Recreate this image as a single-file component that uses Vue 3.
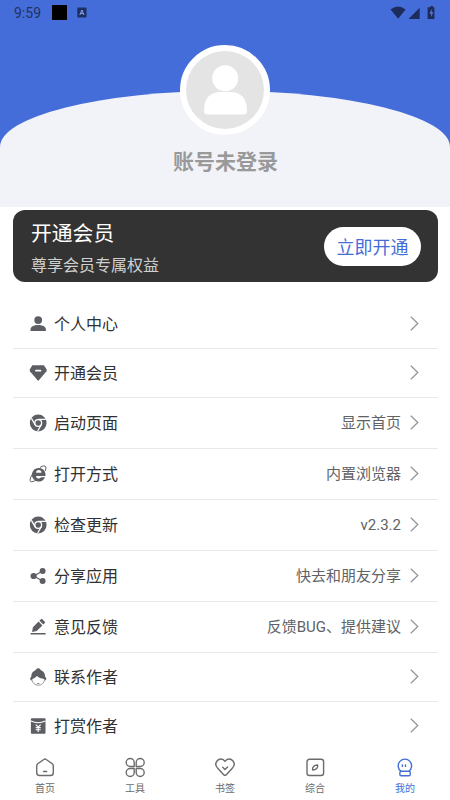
<script setup>
const rows = [
  { label: '个人中心', icon: 'user' },
  { label: '开通会员', icon: 'gem' },
  { label: '启动页面', icon: 'chrome', value: '显示首页' },
  { label: '打开方式', icon: 'ie', value: '内置浏览器' },
  { label: '检查更新', icon: 'chrome', value: 'v2.3.2' },
  { label: '分享应用', icon: 'share', value: '快去和朋友分享' },
  { label: '意见反馈', icon: 'pen', value: '反馈BUG、提供建议' },
  { label: '联系作者', icon: 'face' },
  { label: '打赏作者', icon: 'packet' },
]
const tabs = [
  { label: '首页', icon: 'home' },
  { label: '工具', icon: 'tools' },
  { label: '书签', icon: 'heart' },
  { label: '综合', icon: 'compass' },
  { label: '我的', icon: 'me', active: true },
]
</script>

<template>
  <main class="page">
    <header class="hero">
      <div class="status">
        <span class="time">9:59</span>
        <span class="block"></span>
        <svg class="input-icon" width="10" height="11" viewBox="0 0 10 11">
          <rect x=".3" y=".5" width="9.2" height="10" rx="1" fill="#1e2f64" />
          <path d="M2.8 8 4.9 3 7 8M3.5 6.4h2.8" fill="none" stroke="#8ba5ee" stroke-width="1" />
        </svg>
        <svg class="signals" width="48" height="16" viewBox="0 0 48 16">
          <g fill="#1d2c5b">
            <path d="M1.600 4.500Q9 -1.600 16.600 4.500L9.100 13.800Z" />
            <path d="M30.700 2.700V14H19.500Z" />
            <path d="M40 2.200h1.400V1h2.500v1.200h1.500V14h-6.800V2.200Z" />
          </g>
          <path d="M42.700 4 40.500 8.600h1.600V12l2.200-4.800h-1.600Z" fill="#5a7ce0" />
        </svg>
      </div>
      <div class="dome">
        <div class="avatar">
          <svg width="78" height="78" viewBox="0 0 78 78">
            <circle cx="39" cy="39" r="39" fill="#e4e4e4" />
            <circle cx="39.200" cy="27.300" r="13" fill="#fff" />
            <path d="M18 60Q18 41 35 41H44Q61 41 61 60Q61 63.500 57.500 63.500H21.500Q18 63.500 18 60Z" fill="#fff" />
          </svg>
        </div>
        <h1>账号未登录</h1>
      </div>
    </header>

    <section class="vip">
      <div class="vip-copy">
        <strong>开通会员</strong>
        <span>尊享会员专属权益</span>
      </div>
      <button>立即开通</button>
    </section>

    <ul class="list">
      <li v-for="row in rows" :key="row.label" :class="{ tall: row.value }">
        <svg class="icon" width="18" height="18" viewBox="0 0 18 18" fill="#5c5e63">
          <template v-if="row.icon === 'user'">
            <circle cx="9.200" cy="5.100" r="3.900" />
            <path d="M1.500 16V14.500C1.500 11.600 5.200 10.100 9.200 10.100S16.900 11.600 16.900 14.500V16Z" />
          </template>
          <template v-else-if="row.icon === 'gem'">
            <path d="M3.300 1.300H14.900L17.500 5.300V7.300L9.200 16.900.900 7.300V5.300Z" />
            <rect x="6.200" y="5.700" width="6" height="1.700" rx=".5" fill="#fff" />
          </template>
          <template v-else-if="row.icon === 'chrome'">
            <circle cx="9.200" cy="9" r="8.400" />
            <g fill="none" stroke="#fff" stroke-width="1.300">
              <circle cx="9.200" cy="9" r="3.400" />
              <path d="M9.200 5.400H16.800M6.200 10.800 2.400 4.400M12.200 10.800 8.600 17.200" />
            </g>
          </template>
          <template v-else-if="row.icon === 'ie'">
            <path d="M16.500 9.700A6.800 6.800 0 1 0 16 12.300H12A2.700 2.700 0 0 1 7 10.900H16.500ZM7.100 7.700A2.700 2.700 0 0 1 12.500 7.700Z" fill-rule="evenodd" />
            <path d="M11 2.400C14 .5 16.200.4 16.800 2 17.100 3.200 16.700 4.700 16 6.200M3.100 9.700C.9 13.200.6 15.600 1.600 16.500 2.800 17.200 5.100 16.300 7.300 15" fill="none" stroke="#5c5e63" stroke-width="1" />
          </template>
          <template v-else-if="row.icon === 'share'">
            <path d="M13.700 4 4.700 9 13.700 14" fill="none" stroke="#5c5e63" stroke-width="1.200" />
            <circle cx="4.600" cy="9" r="3.100" />
            <circle cx="13.600" cy="3.900" r="3" />
            <circle cx="13.600" cy="14.100" r="3" />
          </template>
          <template v-else-if="row.icon === 'pen'">
            <path d="M3.100 13.900 3.900 9.200 9.600 3.600 13.400 7.400 7.700 13.100ZM10.500 2.700 12.100 1.100Q12.600.700 13.100 1.100L15.800 3.800Q16.300 4.400 15.800 4.900L14.300 6.500Z" />
            <rect x="1.500" y="15" width="15.200" height="1.400" rx=".5" />
          </template>
          <template v-else-if="row.icon === 'face'">
            <path d="M6.500 2.200A2.900 2.900 0 0 1 11.900 2.200C14.900 3.200 16.100 5.700 16.100 8.500L17.500 10.800 16 12.800 15 11Q10.500 10.500 7.800 8Q6.200 10 3.500 11L2.500 12.800.900 10.800 2.300 8.400C2.300 5.200 3.800 3.100 6.500 2.200Z" />
            <path d="M2.900 11.700A6.400 6.400 0 0 0 15.600 11.700" fill="none" stroke="#808287" stroke-width=".8" />
            <path d="M7.700 15.200h3Q9.200 17.200 7.700 15.200" />
          </template>
          <template v-else>
            <rect x="1.900" y="1.300" width="14.600" height="15.500" rx="1" />
            <path d="M2 4Q9 7.400 16.400 4M6.700 7.600 9.200 10 11.700 7.600M9.200 9.800V15M6.700 10.600H11.700M6.700 12.700H11.700" fill="none" stroke="#fff" stroke-width="1.100" />
          </template>
        </svg>
        <span class="label">{{ row.label }}</span>
        <span class="value">{{ row.value }}</span>
        <svg class="arrow" width="9" height="15" viewBox="0 0 9 15">
          <path d="M.8.7 7.800 7.500.8 14.300" fill="none" stroke="#909298" stroke-width="1.200" />
        </svg>
      </li>
    </ul>

    <nav class="tabs">
      <a v-for="tab in tabs" :key="tab.label" :class="{ active: tab.active }">
        <svg width="22" height="22" viewBox="0 0 22 22" fill="none" stroke="currentColor" stroke-width="1.400" stroke-linecap="round" stroke-linejoin="round">
          <template v-if="tab.icon === 'home'">
            <path d="M9.800 3.500Q11 2.600 12.200 3.500L18 7.500Q19.300 8.500 19.300 10V16.700Q19.300 19.500 16.500 19.500H5.500Q2.700 19.500 2.700 16.700V10Q2.700 8.500 4 7.500ZM9.500 15.500h3.200" />
          </template>
          <template v-else-if="tab.icon === 'tools'">
            <path d="M10.200 10.500H6.200A4 4 0 1 1 10.200 6.500ZM12.200 10.500V6.500A4 4 0 1 1 16.200 10.500ZM10.200 12.500V16.500A4 4 0 1 1 6.200 12.500ZM12.200 12.500H16.200A4 4 0 1 1 12.200 16.500Z" />
          </template>
          <template v-else-if="tab.icon === 'heart'">
            <path d="M11 5.400C8.900 2.200 5.200 2.300 3.200 4.700 1 7.400 1.700 10.200 3.700 12.200L9.700 18.700Q11 20.100 12.300 18.700L18.300 12.200C20.300 10.200 21 7.400 18.800 4.700 16.800 2.300 13.100 2.200 11 5.400ZM8.700 11.200 11 13.600 13.600 10.900" />
          </template>
          <template v-else-if="tab.icon === 'compass'">
            <rect x="3" y="3.200" width="16.600" height="16.300" rx="2.500" />
            <path d="M8.600 14C8.200 11.200 10 9.100 13.600 9 14.200 11.800 12.300 14 8.600 14Z" />
          </template>
          <template v-else>
            <path d="M7 15.300A6.700 6.700 0 1 1 14.800 15.300M7.200 15.300H15Q16.200 15.300 16.200 16.500V18.500Q16.200 19.700 15 19.700H7.100Q5.900 19.700 5.900 18.500V16.500Q5.900 15.300 7.200 15.300ZM8.400 8.900v1.500M11.500 8.900v1.500" />
          </template>
        </svg>
        <span>{{ tab.label }}</span>
      </a>
    </nav>
  </main>
</template>

<style>
body { margin: 0; background: #fff; }
</style>

<style scoped>
.page {
  width: 450px;
  height: 800px;
  overflow: hidden;
  display: flex;
  flex-direction: column;
  background: #fff;
  font-family: Roboto, "Noto Sans CJK SC", sans-serif;
}
.hero {
  height: 207px;
  background: #456dd9;
  display: flex;
  flex-direction: column;
}
.status {
  height: 25px;
  margin-bottom: 66px;
  padding: 0 13px 0 14px;
  display: flex;
  align-items: center;
}
.time { font-size: 14px; color: #223263; width: 38px; }
.block { width: 15px; height: 15px; background: #000; }
.input-icon { margin-left: 10px; }
.signals { margin-left: auto; }
.dome {
  flex: 1;
  background: #f2f3f8;
  border-radius: 50% 50% 0 0 / 56px 56px 0 0;
  display: flex;
  flex-direction: column;
  align-items: center;
}
.avatar {
  width: 78px;
  height: 78px;
  margin-top: -46px;
  border: 6px solid #fff;
  border-radius: 50%;
  background: #fff;
}
.avatar svg { display: block; }
h1 {
  margin: 12px 0 0 1px;
  font-size: 21px;
  line-height: 30px;
  font-weight: 700;
  color: #999;
}
.vip {
  height: 72px;
  margin: 3px 12px 0 13px;
  padding: 0 17px 0 18px;
  box-sizing: border-box;
  border-radius: 12px;
  background: #333;
  display: flex;
  align-items: center;
  justify-content: space-between;
}
.vip-copy { display: flex; flex-direction: column; gap: 3px; padding-top: 7px; }
.vip-copy strong { font-size: 20.800px; line-height: 30px; font-weight: 400; color: #fff; }
.vip-copy span { font-size: 16px; line-height: 28px; color: #d0d0d0; }
button {
  width: 97px;
  height: 39px;
  padding: 0;
  border: 0;
  border-radius: 20px;
  background: #fff;
  color: #456dd9;
  font: 400 18px/39px "Noto Sans CJK SC", sans-serif;
}
.list {
  list-style: none;
  margin: 18px 12px 0 13px;
  padding: 0;
}
.list li {
  height: 49px;
  box-sizing: border-box;
  border-bottom: 1px solid #e9e9ea;
  padding: 0 19px 1px 16px;
  display: flex;
  align-items: center;
}
.list li.tall { height: 51px; }
.list li:last-child { border-bottom-color: transparent; }
.label { margin: 2px 0 0 7px; font-size: 16px; line-height: 24px; color: #303133; }
.value { margin: 0 0 0 auto; font-size: 15px; line-height: 22px; color: #606266; }
.arrow { margin-left: 9px; }
.tabs {
  height: 49px;
  display: grid;
  grid-template-columns: repeat(5, 90px);
}
.tabs a {
  display: flex;
  flex-direction: column;
  align-items: center;
  padding-top: 5px;
  color: #6b6b6b;
  font-size: 10px;
  line-height: 14px;
}
.tabs svg { margin-bottom: 4px; }
.tabs .active { color: #456dd9; }
</style>
